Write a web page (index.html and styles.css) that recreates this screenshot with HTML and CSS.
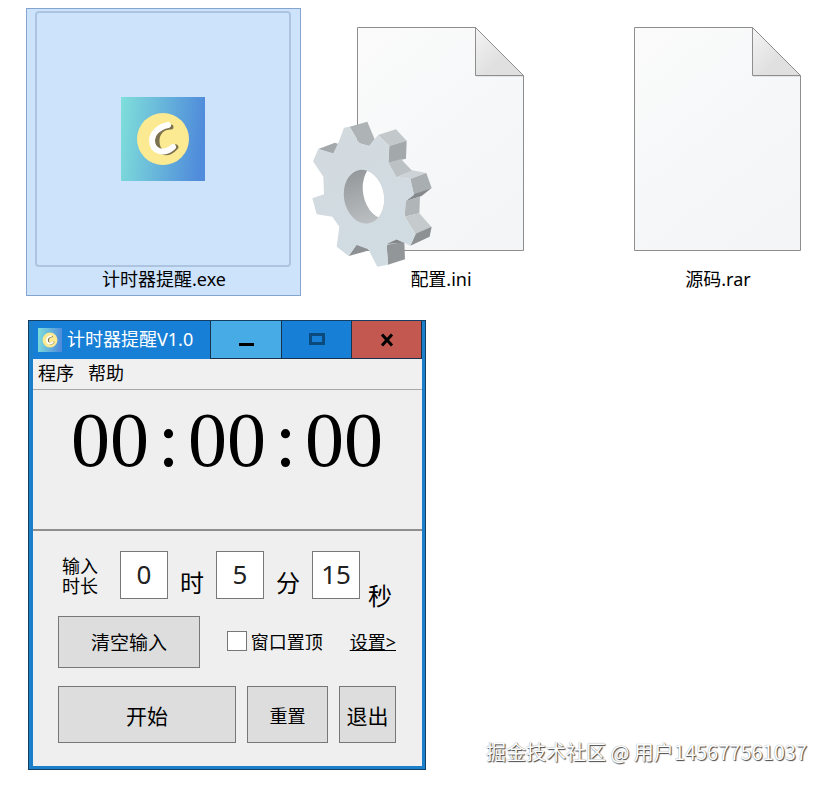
FILE: index.html
```
<!DOCTYPE html>
<html lang="zh">
<head>
    <meta charset="UTF-8">
    <title>计时器提醒</title>
    <link rel="stylesheet" href="styles.css">
</head>
<body>

<svg class="defs" width="0" height="0" aria-hidden="true">
    <defs>
        <linearGradient id="logo-bg" x1="0" y1="0" x2="1" y2="0.1">
            <stop offset="0" stop-color="#7fdfda"/>
            <stop offset="1" stop-color="#508cdb"/>
        </linearGradient>
        <linearGradient id="paper" x1="0" y1="0" x2="0.6" y2="1">
            <stop offset="0" stop-color="#fbfbfb"/>
            <stop offset="1" stop-color="#f3f5f7"/>
        </linearGradient>
        <linearGradient id="fold" x1="0" y1="0" x2="1" y2="1">
            <stop offset="0" stop-color="#f4f4f4"/>
            <stop offset="0.6" stop-color="#e0e0e0"/>
        </linearGradient>
        <linearGradient id="face" x1="0" y1="0" x2="0.4" y2="1">
            <stop offset="0" stop-color="#d3dade"/>
            <stop offset="1" stop-color="#d0dbe2"/>
        </linearGradient>
        <linearGradient id="bore" x1="0" y1="0" x2="0.3" y2="1">
            <stop offset="0" stop-color="#8b8f91"/>
            <stop offset="1" stop-color="#bcc0c3"/>
        </linearGradient>
        <symbol id="logo" viewBox="0 0 84 84">
            <rect width="84" height="84" fill="url(#logo-bg)"/>
            <circle cx="42" cy="42" r="26" fill="#fbea92"/>
            <path d="M50 30C41 30 36 36 36 44C36 56 46 60 55 50" fill="none" stroke="#7c724f" stroke-width="5" stroke-linecap="round"/>
            <path d="M47 28C37 30 31 37 31 43C31 55 43 58 52 50" fill="none" stroke="#fff" stroke-width="6" stroke-linecap="round"/>
        </symbol>
        <symbol id="page" viewBox="0 0 256 256">
            <path d="M45.500 16.500H163.500L211.500 64.500V239.500H45.500Z" fill="url(#paper)" stroke="#8e8e8e"/>
            <path d="M164 65.500H211" stroke="#e3e5e6"/>
            <path d="M163.500 16.500V64.500H211.500Z" fill="url(#fold)" stroke="#8e8e8e"/>
        </symbol>
        <clipPath id="hole"><ellipse cx="177" cy="290" rx="60" ry="81" transform="rotate(-10 177 290)"/></clipPath>
    </defs>
</svg>

<main class="files">
    <figure class="file selected">
        <div class="thumb">
            <svg width="84" height="84"><use href="#logo"/></svg>
        </div>
        <figcaption>计时器提醒.exe</figcaption>
    </figure>
    <figure class="file">
        <div class="thumb">
            <svg width="256" height="256" viewBox="0 0 256 256">
                <use href="#page"/>
                <g transform="translate(-7 89) scale(0.3333)">
                    <path d="M134 80L187 65L209 118L193 138L163 130Z" fill="#aeb3b6"/>
                    <path d="M40 147L90 128L102 133L85 162Z" fill="#a3a8ab"/>
                    <path d="M219 105L273 88L305 122L253 138Z" fill="#c3c8cb"/>
                    <path d="M253 138L305 122L303 176L250 188Z" fill="#a3a8ab"/>
                    <path d="M250 188L288 177L322 213L274 232Z" fill="#bcc1c4"/>
                    <path d="M274 232L322 211L364 219L316 237Z" fill="#cdd3d6"/>
                    <path d="M316 237L364 219L380 264L327 285Z" fill="#a9aeb1"/>
                    <path d="M327 283L380 264L350 288L302 304Z" fill="#85898c"/>
                    <path d="M302 302L345 290L343 340L299 350Z" fill="#b0b5b8"/>
                    <path d="M299 350L343 340L380 382L332 403Z" fill="#c5cacd"/>
                    <path d="M332 401L380 380L374 410L316 437Z" fill="#8d9194"/>
                    <path d="M243 432L273 417L297 428Z" fill="#84888b"/>
                    <path d="M245 434L298 426L300 478L249 494Z" fill="#929699"/>
                    <path d="M131 468L155 433L192 446L183 454Z" fill="#8c9093"/>
                    <path d="M117 83L134 80L163 130L193 138L219 105L253 138L250 188L274 232L316 237L327 285L302 304L299 350L332 403L316 437L276 418L245 432L249 494L217 500L190 448L155 435L131 468L95 440L103 380L82 350L35 343L22 295L57 283L55 230L24 184L40 147L85 160L102 124Z" fill="url(#face)"/>
                    <g clip-path="url(#hole)">
                        <path d="M100 190H260V390H100Z" fill="url(#bore)"/>
                        <ellipse cx="234" cy="273" rx="60" ry="85" transform="rotate(-10 234 273)" fill="#fff"/>
                    </g>
                </g>
            </svg>
        </div>
        <figcaption>配置.ini</figcaption>
    </figure>
    <figure class="file">
        <div class="thumb">
            <svg width="256" height="256"><use href="#page"/></svg>
        </div>
        <figcaption>源码.rar</figcaption>
    </figure>
</main>

<section class="window">
    <header class="titlebar">
        <svg class="app-icon" width="24" height="24"><use href="#logo"/></svg>
        <span class="title">计时器提醒V1.0</span>
        <button class="win-btn min" type="button" aria-label="最小化">
            <svg width="16" height="14"><path d="M1 11.500H16" stroke="#000" stroke-width="3"/></svg>
        </button>
        <button class="win-btn max" type="button" aria-label="最大化">
            <svg width="16" height="14"><rect x="1.500" y="1.500" width="13" height="9" fill="none" stroke="#0b4a7d" stroke-width="3"/></svg>
        </button>
        <button class="win-btn close" type="button" aria-label="关闭">
            <svg width="14" height="14"><path d="M2 1.500L12 12.500M12 1.500L2 12.500" stroke="#000" stroke-width="3"/></svg>
        </button>
    </header>
    <nav class="menu">
        <a href="#">程序</a>
        <a href="#">帮助</a>
    </nav>
    <div class="clock">00<span>:</span>00<span>:</span>00</div>
    <form class="panel">
        <div class="row times">
            <span class="caption">输入<br>时长</span>
            <input id="hour" type="text" value="0">
            <label for="hour">时</label>
            <input id="minute" type="text" value="5">
            <label for="minute">分</label>
            <input id="second" type="text" value="15">
            <label class="low" for="second">秒</label>
        </div>
        <div class="row options">
            <button class="btn clear" type="button">清空输入</button>
            <label class="ontop"><input type="checkbox">窗口置顶</label>
            <a class="settings" href="#">设置&gt;</a>
        </div>
        <div class="row actions">
            <button class="btn start" type="button">开始</button>
            <button class="btn reset" type="button">重置</button>
            <button class="btn quit" type="button">退出</button>
        </div>
    </form>
</section>

<p class="watermark">掘金技术社区 @ 用户145677561037</p>

</body>
</html>
```
FILE: styles.css
```
* { box-sizing: border-box; }
body { position: relative; margin: 0; padding: 8px 0 15px 26px; min-height: 100vh; overflow-x: hidden; background: #fff; color: #000; font-family: "Noto Sans", "Noto Sans CJK SC", sans-serif; font-size: 18px; }
svg { display: block; }
.defs { position: absolute; }

/* files */
.files { display: grid; grid-template-columns: repeat(3, 275px); gap: 2px; }
.file { margin: 0; padding: 2px 9px 4px 8px; border: 1px solid transparent; }
.thumb { display: flex; height: 256px; }
.file figcaption { padding-left: 2px; line-height: 24px; text-align: center; }
.selected { background: #cde3fc; border-color: #84a5cf; }
.selected .thumb { align-items: center; justify-content: center; border: 2px solid #adc4e0; border-radius: 4px; }

/* timer window */
.window { width: 398px; margin: 24px 0 0 2px; padding: 0 3px 3px 4px; border: 1px solid #123e63; background: #1c7fca; }
.titlebar { display: flex; align-items: center; height: 38px; padding-left: 5px; background: #1780d6; }
.title { flex: 1; margin-left: 5px; color: #fff; line-height: 24px; padding-bottom: 2px; white-space: nowrap; }
.win-btn { display: flex; align-items: center; justify-content: center; width: 71px; height: 38px; margin-left: -1px; padding: 0; border: 1px solid #17324a; border-top: 0; }
.min { width: 72px; background: #47abe6; }
.max { background: #1780d6; }
.close { background: #c2584f; }
.menu { display: flex; gap: 14px; height: 31px; padding-left: 5px; background: #f0f0f0; border-bottom: 1px solid #a8a8a8; line-height: 28px; }
.menu a { color: #000; text-decoration: none; }
.clock { height: 139px; padding-top: 10px; padding-right: 1px; background: #efefef; text-align: center; font: 78px/80px "Liberation Serif", serif; }
.clock span { display: inline-block; width: 39px; }

/* settings panel */
.panel { padding: 20px 26px 23px 25px; background: #efefef; border-top: 2px solid #8e8e8e; }
.row { display: flex; }
.times { padding-left: 4px; height: 65px; }
.caption { flex: none; width: 58px; padding-top: 5px; line-height: 20px; }
.times input { flex: none; width: 48px; height: 48px; padding: 0 0 2px; border: 1px solid #777; background: #fff; color: #222; font: 26px "Noto Sans", sans-serif; text-align: center; }
.times label { flex: none; width: 48px; padding-top: 20px; line-height: 24px; font-size: 24px; text-align: center; }
.times .low { width: 40px; padding-top: 33px; }
.btn { height: 57px; padding: 0; border: 1px solid #777; background: #dddddd; color: #000; font-family: inherit; font-size: 21px; }
.options { align-items: center; justify-content: space-between; margin-bottom: 18px; }
.clear { width: 142px; height: 52px; font-size: 19px; }
.ontop { display: flex; align-items: center; gap: 4px; padding-bottom: 2px; }
.ontop input { appearance: none; width: 20px; height: 20px; margin: 0; border: 1px solid #777; background: #fff; }
.settings { padding-bottom: 2px; color: #000; }
.actions { justify-content: space-between; }
.start { width: 178px; }
.reset { width: 81px; font-size: 18px; }
.quit { width: 57px; }

.watermark { position: absolute; right: 21px; bottom: 18px; margin: 0; color: #fff; font-family: "Noto Sans CJK SC", sans-serif; font-size: 20px; line-height: 30px; text-shadow: 1px 1px 1px #444, 0 0 1px #888; }
```
